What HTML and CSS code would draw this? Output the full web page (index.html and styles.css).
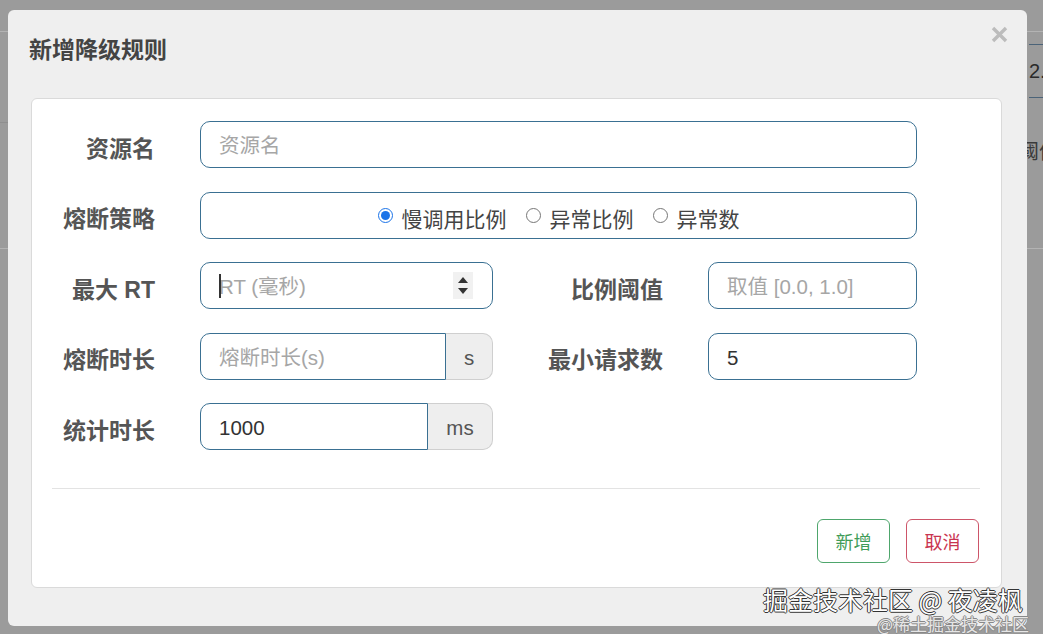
FILE: index.html
```html
<!DOCTYPE html>
<html lang="zh-CN">
<head>
  <meta charset="UTF-8" />
  <meta name="viewport" content="width=device-width, initial-scale=1.0"/>
  <title>新增降级规则</title>
  <link rel="stylesheet" href="styles.css">
</head>
<body>

<!-- page behind the dialog -->
<div class="page">
  <div class="page-bar"></div>
  <div class="page-table">
    <div class="pt-head"><span></span><span class="pt-cell">2.0</span></div>
    <div class="pt-body"><span class="pt-left"></span><span class="pt-cell">阈值</span></div>
  </div>
</div>

<!-- dialog -->
<div class="modal">
  <div class="modal-header">
    <h4 class="modal-title">新增降级规则</h4>
    <span class="close">
      <svg width="17" height="17" viewBox="0 0 17 17"><path d="M2 2 L15 15 M15 2 L2 15" stroke="#bcbcbc" stroke-width="3.4" stroke-linecap="butt"/></svg>
    </span>
  </div>

  <div class="panel">
    <div class="form">
      <label class="lbl">资源名</label>
      <input class="ctl wide" type="text" placeholder="资源名">

      <label class="lbl">熔断策略</label>
      <div class="ctl wide radios">
        <label class="radio"><input type="radio" name="grade" checked> 慢调用比例</label>
        <label class="radio"><input type="radio" name="grade"> 异常比例</label>
        <label class="radio"><input type="radio" name="grade"> 异常数</label>
      </div>

      <label class="lbl">最大 RT</label>
      <div class="num">
        <input class="ctl" type="text" placeholder="RT (毫秒)">
        <span class="caret"></span>
        <span class="spin"><i class="up"></i><i class="down"></i></span>
      </div>
      <label class="lbl">比例阈值</label>
      <input class="ctl" type="text" placeholder="取值 [0.0, 1.0]">

      <label class="lbl">熔断时长</label>
      <div class="grp">
        <input class="ctl" type="text" placeholder="熔断时长(s)">
        <span class="addon">s</span>
      </div>
      <label class="lbl">最小请求数</label>
      <input class="ctl" type="text" value="5">

      <label class="lbl">统计时长</label>
      <div class="grp">
        <input class="ctl" type="text" value="1000">
        <span class="addon addon-ms">ms</span>
      </div>
    </div>

    <div class="divider"></div>

    <div class="footer">
      <button class="btn btn-ok">新增</button>
      <button class="btn btn-cancel">取消</button>
    </div>
  </div>
</div>

<div class="mark">掘金技术社区 @ 夜凌枫</div>
<div class="mark-sub">@稀土掘金技术社区</div>

</body>
</html>
```

FILE: styles.css
```css
* {
  box-sizing: border-box;
}

body {
  margin: 0;
  width: 1043px;
  height: 634px;
  overflow: hidden;
  position: relative;
  background: #9b9b9b;
  font-family: "Liberation Sans", "Noto Sans CJK SC", sans-serif;
}

/* background page */
.page-bar {
  height: 32px;
  border-bottom: 1px solid #b3b3b3;
}

.page-table {
  margin-top: 12px;
}

.pt-head,
.pt-body {
  display: grid;
  grid-template-columns: 1029px 1fr;
  font-size: 20px;
  color: #2a2a2a;
  white-space: nowrap;
  overflow: hidden;
}

.pt-head {
  height: 54px;
}

.pt-head .pt-cell {
  display: flex;
  align-items: center;
  border-top: 1px solid #4b6378;
  border-bottom: 1px solid #4b6378;
}

.pt-body {
  grid-template-columns: 1019px 1fr;
  height: 151px;
  border-bottom: 1px solid #b3b3b3;
  color: #3a3a3a;
}

.pt-left {
  margin-top: 24px;
  border-top: 1px solid #8f8f8f;
}

.pt-body .pt-cell {
  padding-top: 38px;
}

/* dialog */
.modal {
  position: absolute;
  left: 8px;
  top: 10px;
  width: 1019px;
  height: 616px;
  background: #efefef;
  border-radius: 6px;
  padding-top: 25px;
}

.modal-header {
  height: 63px;
  padding-left: 21px;
}

.modal-title {
  margin: 0;
  font-size: 23px;
  line-height: 31px;
  font-weight: bold;
  color: #444;
}

.close {
  position: absolute;
  top: 16px;
  right: 19px;
  width: 17px;
  height: 17px;
}

.close svg {
  display: block;
}

.panel {
  margin: 0 25px 0 23px;
  height: 490px;
  background: #fff;
  border: 1px solid #dadada;
  border-radius: 6px;
}

.form {
  display: grid;
  grid-template-columns: 123px 293px 125px 209px;
  grid-auto-rows: 47px;
  column-gap: 45px;
  row-gap: 23.5px;
  padding-top: 22px;
}

.lbl {
  align-self: center;
  padding-top: 8px;
  text-align: right;
  font-size: 23px;
  line-height: 30px;
  font-weight: bold;
  color: #555;
  white-space: nowrap;
}

.ctl {
  width: 100%;
  height: 47px;
  padding: 3px 18px 0;
  border: 1px solid #3a7092;
  border-radius: 10px;
  background: #fff;
  font-family: inherit;
  font-size: 20.5px;
  color: #333;
  outline: none;
}

.ctl::placeholder {
  color: #a6a6a6;
}

.wide {
  grid-column: 2 / 5;
}

.radios {
  display: flex;
  justify-content: center;
  align-items: center;
  gap: 19px;
  padding-top: 5px;
}

.radio {
  display: flex;
  align-items: center;
  gap: 9px;
  font-size: 21px;
  color: #444;
  white-space: nowrap;
}

.radio input {
  margin: 0 0 5px 0;
  width: 15px;
  height: 15px;
  accent-color: #1a73e8;
}

.num {
  position: relative;
}

.caret {
  position: absolute;
  left: 19px;
  top: 12px;
  width: 1.5px;
  height: 24px;
  background: #333;
}

.spin {
  position: absolute;
  right: 20px;
  top: 10px;
  width: 20px;
  height: 27px;
  background: #f1f1f1;
  display: flex;
  flex-direction: column;
  align-items: center;
  justify-content: center;
  gap: 5px;
}

.spin i {
  display: block;
  width: 0;
  height: 0;
  border-left: 5px solid transparent;
  border-right: 5px solid transparent;
}

.spin .up {
  border-bottom: 6px solid #333;
}

.spin .down {
  border-top: 6px solid #333;
}

.grp {
  display: flex;
}

.grp .ctl {
  flex: 1;
  min-width: 0;
  border-radius: 10px 0 0 10px;
}

.addon {
  width: 47px;
  height: 47px;
  display: flex;
  align-items: center;
  justify-content: center;
  padding-top: 3px;
  background: #eee;
  border: 1px solid #cfcfcf;
  border-left: none;
  border-radius: 0 10px 10px 0;
  font-size: 20.5px;
  color: #555;
}

.addon-ms {
  width: 65px;
}

.divider {
  margin: 38px 21px 0 20px;
  border-top: 1px solid #e3e3e3;
}

.footer {
  display: flex;
  justify-content: flex-end;
  gap: 16px;
  padding: 30px 22px 0 0;
}

.btn {
  width: 73px;
  height: 44px;
  background: #fff;
  border-radius: 6px;
  font-family: inherit;
  font-size: 18px;
}

.btn-ok {
  border: 1px solid #4ea66c;
  color: #3f9c58;
}

.btn-cancel {
  border: 1px solid #cd5569;
  color: #c93450;
}

/* watermark over the shot */
.mark {
  position: absolute;
  left: 763px;
  top: 586px;
  font-family: "Noto Sans CJK SC", sans-serif;
  font-size: 25px;
  line-height: 27px;
  color: #fff;
  white-space: nowrap;
  text-shadow: 1px 0 0 #333, -1px 0 0 #333, 0 1px 0 #333, 0 -1px 0 #333;
}

.mark-sub {
  position: absolute;
  left: 877px;
  top: 614px;
  font-family: "Noto Sans CJK SC", sans-serif;
  font-size: 17px;
  line-height: 19px;
  color: #e6e6e6;
  white-space: nowrap;
  text-shadow: 1px 0 0 #888, -1px 0 0 #888, 0 1px 0 #888, 0 -1px 0 #888;
}
```
